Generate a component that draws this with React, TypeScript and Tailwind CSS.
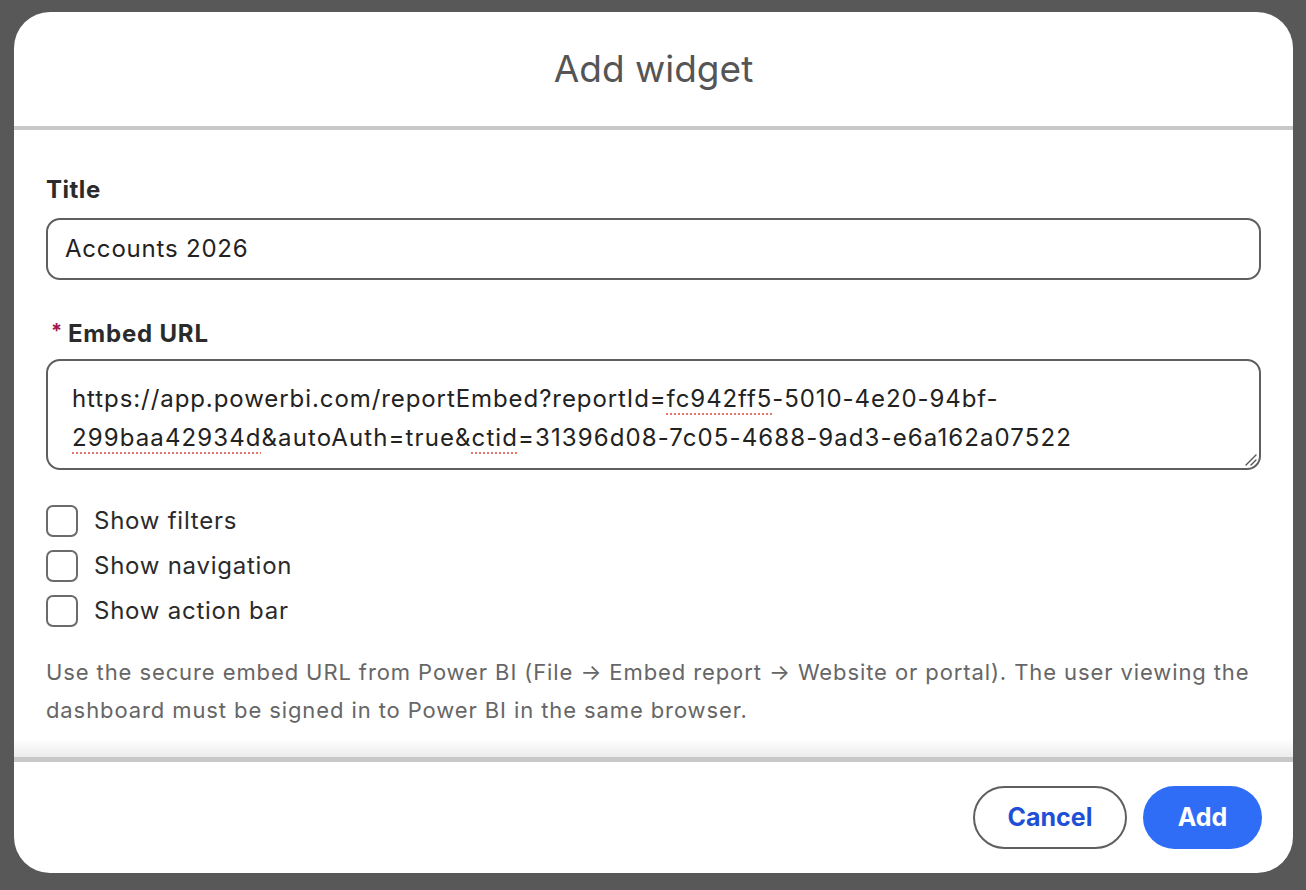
import React from 'react'

const font = { fontFamily: 'Inter, "Noto Sans", sans-serif' }

const SpellMark: React.FC<{ children: React.ReactNode }> = ({ children }) => (
  <span className="underline decoration-dotted decoration-[#e8736b] decoration-2 underline-offset-[6px]">
    {children}
  </span>
)

const CheckRow: React.FC<{ label: string }> = ({ label }) => (
  <label className="flex items-center gap-[16px] h-[32px]">
    <span className="block w-[32px] h-[32px] rounded-[7px] border-2 border-[#6b6b6b] bg-white" />
    <span className="text-[24px] tracking-[0.75px] text-[#2b2b2b]">{label}</span>
  </label>
)

const App: React.FC = () => {
  return (
    <div
      className="w-[1306px] h-[890px] bg-[#585858] pt-[12px] pl-[14px]"
      style={font}
    >
      <div className="w-[1279px] h-[861px] rounded-[36px] bg-white flex flex-col overflow-hidden">
        {/* header */}
        <div className="h-[114px] flex items-center justify-center">
          <h1 className="text-[37px] text-[#555555] font-normal">
            Add widget
          </h1>
        </div>
        <div className="h-[4px] bg-[#c8c8c8]" />

        {/* body */}
        <div className="relative flex-1 px-[32px] pt-[44px]">
          <div className="text-[24px] font-bold tracking-[0.5px] text-[#2b2b2b] leading-[32px]">
            Title
          </div>
          <div className="mt-[12px] h-[62px] rounded-[14px] border-2 border-[#5f5f5f] flex items-center pl-[17px] text-[24px] tracking-[0.8px] text-[#222222]">
            Accounts 2026
          </div>

          <div className="mt-[38px] flex items-center text-[24px] font-bold tracking-[0.8px] text-[#2b2b2b] leading-[32px]">
            <span className="text-[#a3174f] text-[20px] mr-[5px] ml-[5px] -mt-[6px]">*</span>
            Embed URL
          </div>
          <div className="relative mt-[9px] h-[111px] rounded-[14px] border-2 border-[#5f5f5f] pl-[24px] pt-[18px] text-[24px] tracking-[0.92px] leading-[39px] text-[#222222]">
            <div>
              https://app.powerbi.com/reportEmbed?reportId=<SpellMark>fc942ff5</SpellMark>-5010-4e20-94bf-
            </div>
            <div className="tracking-[1.1px]">
              <SpellMark>299baa42934d</SpellMark>&amp;autoAuth=true&amp;<SpellMark>ctid</SpellMark>=31396d08-7c05-4688-9ad3-e6a162a07522
            </div>
            <svg
              className="absolute right-[2px] bottom-[2px]"
              width="14"
              height="14"
              viewBox="0 0 14 14"
            >
              <path d="M13 3 L3 13 M13 8 L8 13" stroke="#555" strokeWidth="1.4" strokeLinecap="round" />
            </svg>
          </div>

          <div className="mt-[35px] flex flex-col gap-[13px]">
            <CheckRow label="Show filters" />
            <CheckRow label="Show navigation" />
            <CheckRow label="Show action bar" />
          </div>

          <p className="mt-[26px] text-[22px] tracking-[0.9px] leading-[38px] text-[#666666]">
            Use the secure embed URL from Power BI (File → Embed report → Website or portal). The user viewing the
            dashboard must be signed in to Power BI in the same browser.
          </p>

          <div className="absolute left-0 right-0 bottom-0 h-[18px] bg-gradient-to-b from-white to-[#ececec]" />
        </div>

        <div className="h-[5px] bg-[#c8c8c8]" />

        {/* footer */}
        <div className="h-[111px] flex items-center justify-end gap-[16px] pr-[31px]">
          <button
            type="button"
            className="h-[63px] w-[154px] rounded-full border-2 border-[#5f5f5f] text-[25px] font-bold text-[#1f4fd6] bg-white"
          >
            Cancel
          </button>
          <button
            type="button"
            className="h-[63px] w-[119px] rounded-full bg-[#2f6df6] text-[25px] font-bold text-white"
          >
            Add
          </button>
        </div>
      </div>
    </div>
  )
}

export default App
